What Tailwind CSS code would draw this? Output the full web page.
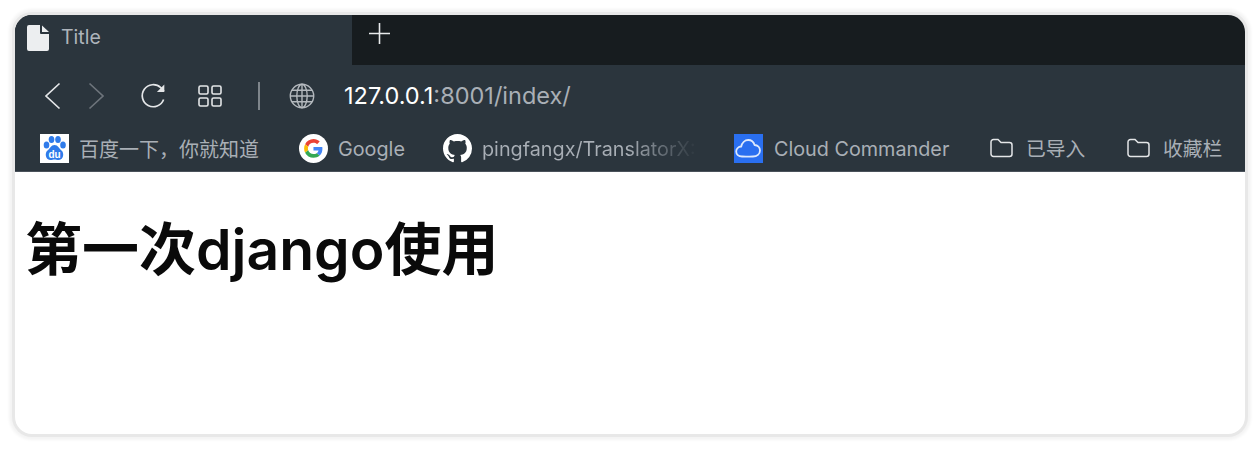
<!DOCTYPE html>
<html lang="zh-CN">
<head>
    <meta charset="UTF-8">
    <meta name="viewport" content="width=device-width, initial-scale=1.0">
    <title>Title</title>
    <script src="https://cdn.jsdelivr.net/npm/@tailwindcss/browser@4"></script>
</head>
<body class="bg-white h-[449px] overflow-hidden pt-[15px] px-[15px] font-['Inter','Noto_Sans_CJK_SC',sans-serif]">
    <div class="h-[419px] rounded-[17px] overflow-hidden bg-white shadow-[0_0_0_3px_#e8e8e8,0_0_3px_6px_#f4f4f4]">
        <!-- Tabs -->
        <div class="flex h-[50px] bg-[#171c1f]">
            <div class="w-[337px] bg-[#2b353d] flex items-center pl-[12px] pb-[6px] pt-[2px]">
                <svg class="w-[22px] h-[26px]" viewBox="0 0 22 26" fill="#eceef0"><path d="M2 0h11v8a1 1 0 0 0 1 1h8v15a2 2 0 0 1-2 2H2a2 2 0 0 1-2-2V2a2 2 0 0 1 2-2z"/><path d="M15 0.5l7 6.5h-7z"/></svg>
                <span class="ml-[12px] text-[19.5px] text-[#aeb4bb]">Title</span>
            </div>
            <div class="pl-[17px] pt-[8px]">
                <svg class="w-[21px] h-[21px]" viewBox="0 0 21 21" stroke="#e8eaec" stroke-width="1.6" fill="none"><path d="M10.5 0v21M0 10.5h21"/></svg>
            </div>
        </div>

        <!-- Toolbar -->
        <div class="h-[107px] bg-[#2b353d] border-b border-[#4a525a]">
            <div class="flex items-center h-[62px] pl-[29px]">
                <svg class="w-[17px] h-[28px]" viewBox="0 0 17 28" stroke="#e4e6e8" stroke-width="1.7" fill="none"><path d="M15.5 1.5L2 14l13.5 12.5"/></svg>
                <svg class="w-[17px] h-[28px] ml-[27px]" viewBox="0 0 17 28" stroke="#6d747b" stroke-width="1.7" fill="none"><path d="M1.5 1.5L15 14 1.5 26.5"/></svg>
                <svg class="w-[26px] h-[26px] ml-[35px]" viewBox="0 0 26 26" stroke="#e4e6e8" stroke-width="1.7" fill="none"><path d="M23.6 16.5A11 11 0 1 1 20.8 4.7L24 8"/><path d="M24.3 1.5v7.4h-7.4" fill="#e4e6e8" stroke="none"/></svg>
                <svg class="w-[24px] h-[22px] ml-[32px]" viewBox="0 0 24 22" stroke="#e4e6e8" stroke-width="1.6" fill="none"><rect x="1" y="1" width="9" height="8" rx="1.5"/><rect x="14" y="1" width="9" height="8" rx="1.5"/><rect x="1" y="13" width="9" height="8" rx="1.5"/><rect x="14" y="13" width="9" height="8" rx="1.5"/></svg>
                <div class="w-[2px] h-[28px] bg-[#7e858b] ml-[36px]"></div>
                <svg class="w-[26px] h-[26px] ml-[29px]" viewBox="0 0 26 26" stroke="#b4b9be" stroke-width="1.4" fill="none"><circle cx="13" cy="13" r="11.7"/><ellipse cx="13" cy="13" rx="5.2" ry="11.7"/><path d="M13 1.3v23.4M1.3 13h23.4M3 7.2h20M3 18.8h20"/></svg>
                <div class="ml-[29px] text-[23.5px] text-[#a9afb6]"><span class="text-white">127.0.0.1</span>:8001/index/</div>
            </div>

            <!-- Bookmarks -->
            <div class="flex items-center h-[30px] mt-[6px] pl-[25px] text-[19.8px] text-[#a9afb6] whitespace-nowrap">
                <svg class="w-[29px] h-[29px] shrink-0" viewBox="0 0 29 29">
                    <rect width="29" height="29" fill="#fff"/>
                    <g fill="#2f7bea">
                        <ellipse cx="6.5" cy="11" rx="2.8" ry="3.6"/>
                        <ellipse cx="11.5" cy="5.5" rx="2.8" ry="3.6"/>
                        <ellipse cx="18" cy="5.5" rx="2.8" ry="3.6"/>
                        <ellipse cx="23" cy="11" rx="2.8" ry="3.6"/>
                        <path d="M14.5 11c3.5 0 4.5 3.5 7 5.5 3 2.5 2 9-2.5 9.5-2 .2-3-.6-4.500-.6s-2.500.8-4.500.6C5.500 25.500 4.500 19 7.500 16.500c2.500-2 3.500-5.500 7-5.500z"/>
                    </g>
                    <text x="14.500" y="24" text-anchor="middle" font-size="10" font-weight="700" fill="#fff" font-family="Liberation Sans, sans-serif">du</text>
                </svg>
                <span class="ml-[10px] pt-[3px] w-[220px] shrink-0 text-[20px]">百度一下，你就知道</span>
                <svg class="w-[29px] h-[29px] shrink-0" viewBox="0 0 29 29">
                    <circle cx="14.500" cy="14.500" r="14.500" fill="#fff"/>
                    <g transform="translate(5.100 5.100) scale(0.39)">
                        <path fill="#EA4335" d="M24 9.500c3.540 0 6.710 1.220 9.210 3.600l6.850-6.850C35.900 2.380 30.470 0 24 0 14.620 0 6.510 5.380 2.560 13.220l7.980 6.190C12.430 13.720 17.740 9.500 24 9.500z"/>
                        <path fill="#4285F4" d="M46.980 24.550c0-1.570-.15-3.090-.38-4.550H24v9.020h12.940c-.58 2.960-2.260 5.480-4.780 7.180l7.730 6c4.510-4.180 7.090-10.360 7.090-17.650z"/>
                        <path fill="#FBBC05" d="M10.530 28.590c-.48-1.450-.76-2.990-.76-4.590s.27-3.140.76-4.590l-7.980-6.190C.92 16.460 0 20.120 0 24c0 3.880.92 7.540 2.560 10.780l7.970-6.190z"/>
                        <path fill="#34A853" d="M24 48c6.480 0 11.930-2.130 15.890-5.810l-7.730-6c-2.150 1.450-4.920 2.300-8.160 2.300-6.260 0-11.570-4.220-13.470-9.910l-7.980 6.190C6.510 42.620 14.620 48 24 48z"/>
                    </g>
                </svg>
                <span class="ml-[10px] pt-[3px] w-[105px] shrink-0">Google</span>
                <svg class="w-[29px] h-[29px] shrink-0" viewBox="0 0 16 16" fill="#fff"><path d="M8 0C3.580 0 0 3.580 0 8c0 3.540 2.290 6.530 5.470 7.590.4.070.55-.17.55-.38 0-.19-.01-.82-.01-1.490-2.010.37-2.530-.49-2.690-.94-.09-.23-.48-.94-.82-1.130-.28-.15-.68-.52-.01-.53.63-.01 1.080.58 1.230.82.720 1.210 1.870.87 2.330.66.070-.52.280-.87.510-1.070-1.780-.2-3.640-.89-3.640-3.950 0-.87.310-1.590.820-2.150-.08-.2-.36-1.020.080-2.120 0 0 .67-.21 2.200.82.640-.18 1.320-.27 2-.27.680 0 1.360.09 2 .27 1.530-1.040 2.200-.82 2.200-.82.440 1.100.160 1.920.080 2.120.510.560.820 1.270.820 2.150 0 3.070-1.870 3.750-3.650 3.950.290.250.540.730.540 1.480 0 1.070-.01 1.930-.01 2.200 0 .210.150.460.550.380A8.013 8.013 0 0 0 16 8c0-4.420-3.580-8-8-8z"/></svg>
                <span class="ml-[10px] pt-[3px] w-[220px] shrink-0 bg-linear-to-r from-[#a9afb6] from-[66%] to-[#2b353d] to-[98%] bg-clip-text text-transparent">pingfangx/TranslatorX:</span>
                <span class="ml-[32px] w-[29px] h-[29px] shrink-0 bg-[#2a6ff0] flex items-center justify-center">
                    <svg class="w-[27px] h-[20px]" viewBox="0 0 27 20" stroke="#dce8fc" stroke-width="1.800" fill="none"><path d="M7 18.500c-3.500 0-5.800-2.300-5.800-5s2.200-4.800 5-5c.8-3.700 3.600-6.500 7-6.500 3 0 5.500 2 6.400 5 3 .2 5.400 2.500 5.400 5.500 0 3.500-3 6-7 6-3.500 0-7.500.2-10.600 0z"/></svg>
                </span>
                <span class="ml-[11px] pt-[3px] w-[216px] shrink-0">Cloud Commander</span>
                <svg class="w-[23px] h-[20px] shrink-0" viewBox="0 0 23 20" stroke="#e4e6e8" stroke-width="1.500" fill="none"><path d="M1 4a2.500 2.500 0 0 1 2.500-2.500h4.500l3 3h8.500A2.500 2.500 0 0 1 22 7v9a2.500 2.500 0 0 1-2.500 2.500h-16A2.500 2.500 0 0 1 1 16z"/></svg>
                <span class="ml-[13px] pt-[3px] w-[101px] shrink-0">已导入</span>
                <svg class="w-[23px] h-[20px] shrink-0" viewBox="0 0 23 20" stroke="#e4e6e8" stroke-width="1.500" fill="none"><path d="M1 4a2.500 2.500 0 0 1 2.500-2.500h4.500l3 3h8.500A2.500 2.500 0 0 1 22 7v9a2.500 2.500 0 0 1-2.500 2.500h-16A2.500 2.500 0 0 1 1 16z"/></svg>
                <span class="ml-[13px] pt-[3px]">收藏栏</span>
            </div>
        </div>

        <!-- Page -->
        <h1 class="pl-[10px] pt-[43px] text-[57px] leading-[70px] font-semibold text-[#0a0a0a]">第一次django使用</h1>
    </div>
</body>
</html>
